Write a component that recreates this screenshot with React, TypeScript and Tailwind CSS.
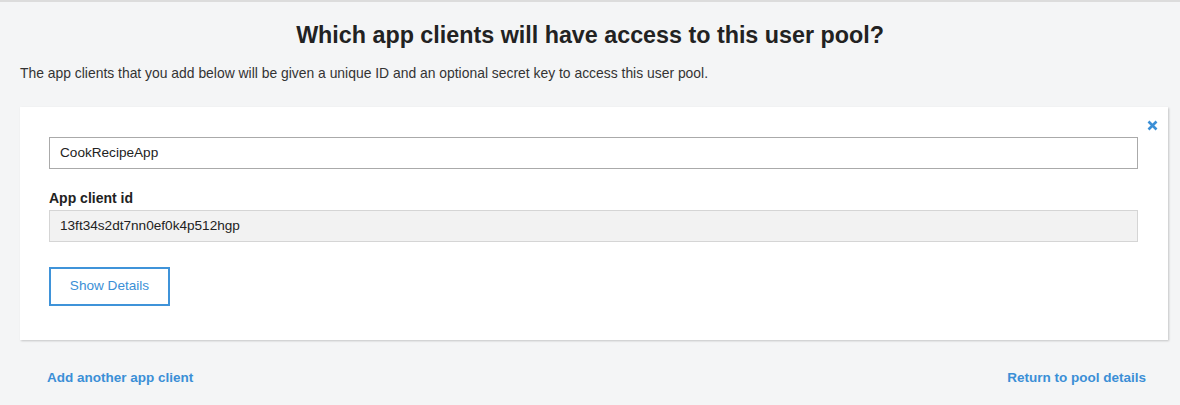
import React from "react";

export default function App() {
  return (
    <div
      className="w-[1180px] h-[405px] bg-[#f4f5f6] border-t-2 border-[#dcdcdc] overflow-hidden text-[#333]"
      style={{ fontFamily: '"Liberation Sans", Arial, sans-serif' }}
    >
      <h1 className="pt-[19px] text-center text-[23.3px] leading-[28px] font-bold text-[#222]">
        Which app clients will have access to this user pool?
      </h1>
      <p className="mt-[14px] ml-[20px] text-[13.9px] leading-[20px] text-[#333]">
        The app clients that you add below will be given a unique ID and an optional secret key to access this user pool.
      </p>
      <div className="relative mt-[24px] ml-[20px] w-[1148px] bg-white shadow-[1px_1px_2px_rgba(0,0,0,0.2)] pt-[30px] pl-[29px] pr-[30px] pb-[34px]">
        <button className="absolute right-[10px] top-[12px] w-[12px] h-[12px] flex items-center justify-center">
          <svg width="11" height="11" viewBox="0 0 11 11">
            <path d="M1.5 1.5 L9.5 9.5 M9.5 1.5 L1.5 9.5" stroke="#3b8fd6" strokeWidth="2.6" strokeLinecap="butt" />
          </svg>
        </button>
        <div className="h-[32px] border border-[#aaa] flex items-center px-[10px] text-[13.6px] text-[#222]">
          CookRecipeApp
        </div>
        <div className="mt-[19px] text-[14px] leading-[20px] font-bold text-[#222]">App client id</div>
        <div className="mt-[2px] h-[32px] border border-[#d5d5d5] bg-[#f2f2f2] flex items-center px-[10px] text-[13.6px] text-[#222]">
          13ft34s2dt7nn0ef0k4p512hgp
        </div>
        <button className="mt-[25px] w-[121px] h-[39px] border-2 border-[#3f93d9] bg-white text-[13.6px] text-[#3b8fd6] flex items-center justify-center">
          Show Details
        </button>
      </div>
      <div className="mt-[28px] flex justify-between pl-[47px] pr-[34px] text-[13.5px] leading-[20px] font-bold text-[#3b8fd6]">
        <a>Add another app client</a>
        <a>Return to pool details</a>
      </div>
    </div>
  );
}
